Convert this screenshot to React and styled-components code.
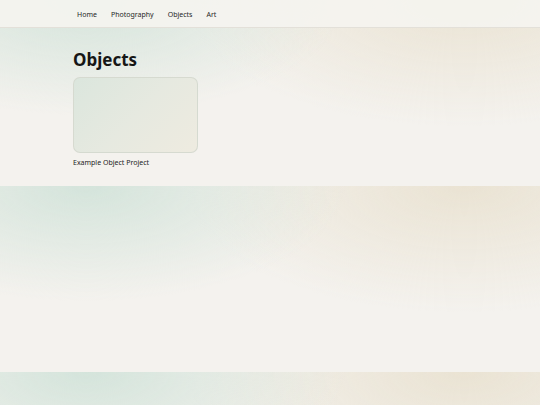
import React from 'react';
import styled, { createGlobalStyle } from 'styled-components';

const GlobalStyle = createGlobalStyle`
  body {
    margin: 0;
    font-family: "Noto Sans", "Open Sans", sans-serif;
    color: #1c1c1c;
    background:
      radial-gradient(ellipse 48% 62% at 16% 0%, rgba(212, 228, 219, 1), rgba(212, 228, 219, 0) 100%),
      radial-gradient(ellipse 52% 68% at 86% 0%, rgba(234, 227, 211, 1), rgba(234, 227, 211, 0) 100%),
      #f4f2ee;
  }
`;

const Nav = styled.nav`
  height: 28px;
  box-sizing: border-box;
  padding-top: 1px;
  background: rgba(245, 244, 240, 0.9);
  border-bottom: 1px solid rgba(225, 222, 214, 0.9);
`;

const NavInner = styled.div`
  max-width: 394px;
  margin: 0 auto;
  height: 100%;
  display: flex;
  align-items: center;
  gap: 14px;
  padding-left: 4px;
  box-sizing: border-box;
`;

const NavLink = styled.a`
  font-size: 7px;
  color: #262626;
  text-decoration: none;
`;

const Main = styled.main`
  max-width: 394px;
  margin: 0 auto;
  padding: 20px 0 18px;
`;

const Title = styled.h1`
  margin: 0 0 5px;
  font-size: 17px;
  font-weight: 700;
  line-height: 24px;
  color: #161616;
`;

const Grid = styled.div`
  display: grid;
  grid-template-columns: 125px;
`;

const Card = styled.a`
  display: flex;
  flex-direction: column;
  gap: 5px;
  text-decoration: none;
  color: inherit;
`;

const Thumb = styled.div`
  height: 76px;
  border-radius: 7px;
  border: 1px solid rgba(212, 216, 206, 0.9);
  box-sizing: border-box;
  background: linear-gradient(135deg, #dbe6dd 0%, #e6e9e0 50%, #eeebe0 100%);
`;

const Caption = styled.span`
  font-size: 7px;
  line-height: 10px;
  color: #222;
`;

export default function App() {
  return (
    <>
      <GlobalStyle />
      <Nav>
        <NavInner>
          <NavLink href="#">Home</NavLink>
          <NavLink href="#">Photography</NavLink>
          <NavLink href="#">Objects</NavLink>
          <NavLink href="#">Art</NavLink>
        </NavInner>
      </Nav>
      <Main>
        <Title>Objects</Title>
        <Grid>
          <Card href="#">
            <Thumb />
            <Caption>Example Object Project</Caption>
          </Card>
        </Grid>
      </Main>
    </>
  );
}
